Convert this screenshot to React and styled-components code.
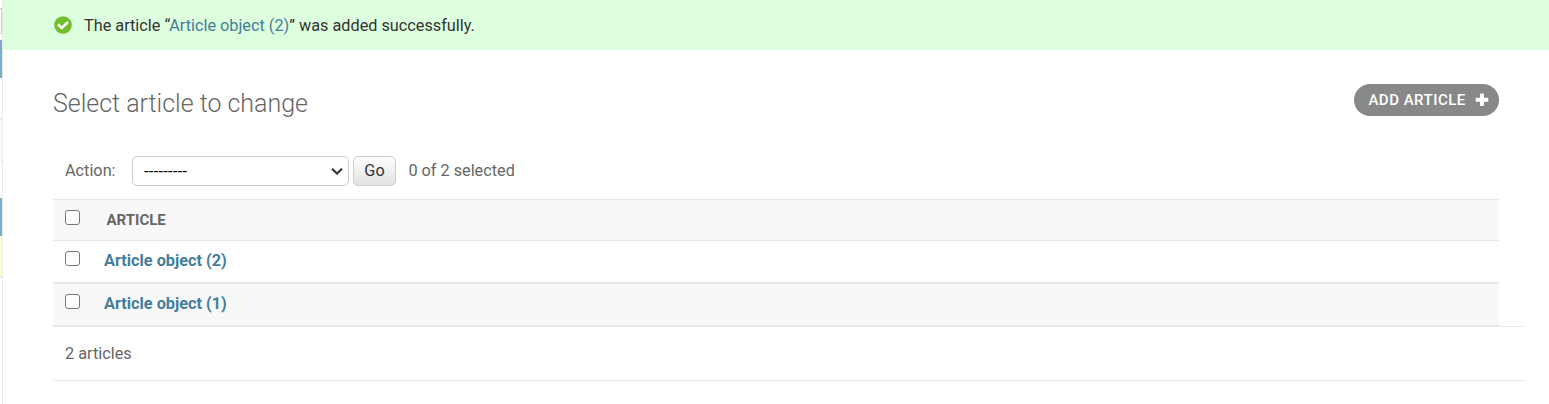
import React from 'react';
import styled, { createGlobalStyle } from 'styled-components';

const Global = createGlobalStyle`
  *, *::before, *::after { box-sizing: border-box; }
  body {
    margin: 0;
    background: #fff;
    color: #333;
    font-family: Roboto, "Liberation Sans", sans-serif;
    font-size: 16.25px;
    overflow: hidden;
  }
`;

const Page = styled.div`
  display: flex;
  height: 404px;
  overflow: hidden;
`;

const Sidebar = styled.aside`
  flex: none;
  width: 3px;
  border-right: 1px solid #eaeaea;
  display: flex;
  flex-direction: column;
`;

const FilterEdge = styled.div`
  height: 26px;
  margin: 8px 0 6px;
  border: 1px solid #ccc;
  border-left: 0;
`;

const Caption = styled.div`
  height: 38px;
  background: #79aec8;
`;

const ModelRow = styled.div`
  height: ${(p) => p.$height}px;
  background: ${(p) => p.$bg || '#fff'};
  border-bottom: ${(p) => p.$line || 0}px solid #eaeaea;
`;

const Main = styled.main`
  flex: 1;
  min-width: 0;
`;

const Message = styled.div`
  display: flex;
  align-items: center;
  gap: 12px;
  height: 50px;
  padding: 0 50px 0 51px;
  background: #dfd;
`;

const MessageText = styled.span`
  line-height: 20px;
  padding-top: 1px;
`;

const Link = styled.a`
  color: #447e9b;
  text-decoration: none;
`;

const Content = styled.div`
  padding: 34px 50px 0;
`;

const Heading = styled.div`
  display: flex;
  justify-content: space-between;
  align-items: flex-start;
  height: 72px;
`;

const Title = styled.h1`
  margin: 5px 0 0;
  font-size: 25px;
  font-weight: 300;
  line-height: 30px;
  letter-spacing: -0.02px;
  color: #666;
`;

const AddButton = styled.a`
  display: flex;
  align-items: center;
  justify-content: space-between;
  width: 145px;
  height: 32px;
  padding: 0 10px 0 14.4px;
  border-radius: 16px;
  background: #888;
  color: #fff;
  font-size: 15px;
  font-weight: 500;
  letter-spacing: 0.5px;
  text-transform: uppercase;
  white-space: nowrap;
`;

const Actions = styled.div`
  display: flex;
  align-items: center;
  height: 43px;
  padding: 0 12px 13px;
  color: #666;
`;

const ActionLabel = styled.label`
  width: 67px;
  padding-bottom: 2px;
`;

const SelectBox = styled.div`
  display: flex;
  align-items: center;
  justify-content: space-between;
  width: 217px;
  height: 30px;
  padding: 0 4px 0 11px;
  border: 1px solid #ccc;
  border-radius: 5px;
  color: #000;
  font-size: 16.25px;
`;

const SelectValue = styled.span`
  letter-spacing: 0.33px;
`;

const GoButton = styled.button`
  width: 43px;
  height: 30px;
  margin: 0 12px 0 4px;
  padding: 0 0 2px;
  border: 1px solid #ccc;
  border-radius: 5px;
  background: linear-gradient(#fdfdfd, #e2e2e2);
  color: #333;
  font: inherit;
`;

const SelectedCount = styled.span`
  padding: 0 0 2px 0.4px;
`;

const Table = styled.div`
  color: #666;
`;

const Row = styled.div`
  display: flex;
  align-items: center;
  height: ${(p) => (p.$head ? 42 : 43)}px;
  padding: 0 12px;
  background: ${(p) => (p.$shaded ? '#f8f8f8' : '#fff')};
  border-top: ${(p) => (p.$head ? 1 : 0)}px solid #e8e8e8;
  border-bottom: ${(p) => (p.$head ? 1 : 2)}px solid #e8e8e8;
`;

const Check = styled.input`
  appearance: none;
  width: 15px;
  height: 15px;
  margin: 0 ${(p) => p.$gap}px ${(p) => p.$lift}px 0;
  border: 1.25px solid #767676;
  border-radius: 3px;
  background: #fff;
`;

const ColumnTitle = styled.span`
  font-size: 15px;
  font-weight: 700;
  text-transform: uppercase;
`;

const ItemLink = styled(Link)`
  font-weight: 700;
  line-height: 20px;
  margin-bottom: 2px;
`;

const Paginator = styled.div`
  display: flex;
  align-items: center;
  width: calc(100% + 25px);
  height: 54px;
  padding: 0 12px;
  border-bottom: 1px solid #e8e8e8;
  color: #666;
`;

const TableEnd = styled.div`
  width: calc(100% + 25px);
  height: 1px;
  margin-top: -1px;
  background: #e8e8e8;
`;

const SuccessIcon = () => (
  <svg width="18" height="18" viewBox="0 0 18 18" aria-hidden="true">
    <circle cx="9" cy="9" r="8.8" fill="#70bf2b" />
    <path d="M4 8.4 7.7 12 14 6" fill="none" stroke="#fff" strokeWidth="2.5" />
  </svg>
);

const PlusIcon = () => (
  <svg width="14" height="14" viewBox="0 0 14 14" aria-hidden="true">
    <rect x="5" y="0.5" width="4" height="12.5" rx="0.8" fill="#fff" />
    <rect x="0.7" y="4.8" width="12.6" height="4" rx="0.8" fill="#fff" />
  </svg>
);

const Chevron = () => (
  <svg width="14" height="10" viewBox="0 0 14 10" aria-hidden="true">
    <path d="M2 2.8 7 7.5l5-4.7" fill="none" stroke="#333" strokeWidth="2.1" />
  </svg>
);

const articles = ['Article object (2)', 'Article object (1)'];

export default function App() {
  return (
    <>
      <Global />
      <Page>
        <Sidebar>
          <FilterEdge />
          <Caption />
          <ModelRow $height={42} $line={2} />
          <ModelRow $height={41} $line={1} $bg="#f8f8f8" />
          <ModelRow $height={37} />
          <Caption />
          <ModelRow $height={42} $line={2} $bg="#ffc" />
        </Sidebar>
        <Main>
          <Message>
            <SuccessIcon />
            <MessageText>
              The article “<Link>Article object (2)</Link>” was added successfully.
            </MessageText>
          </Message>
          <Content>
            <Heading>
              <Title>Select article to change</Title>
              <AddButton>
                Add article
                <PlusIcon />
              </AddButton>
            </Heading>
            <Actions>
              <ActionLabel>Action:</ActionLabel>
              <SelectBox>
                <SelectValue>---------</SelectValue>
                <Chevron />
              </SelectBox>
              <GoButton>Go</GoButton>
              <SelectedCount>0 of 2 selected</SelectedCount>
            </Actions>
            <Table>
              <Row $head $shaded>
                <Check type="checkbox" $gap={26.5} $lift={5} />
                <ColumnTitle>Article</ColumnTitle>
              </Row>
              {articles.map((name, i) => (
                <Row key={name} $shaded={i % 2 === 1}>
                  <Check type="checkbox" $gap={24} $lift={7} />
                  <ItemLink>{name}</ItemLink>
                </Row>
              ))}
            </Table>
            <TableEnd />
            <Paginator>2 articles</Paginator>
          </Content>
        </Main>
      </Page>
    </>
  );
}
